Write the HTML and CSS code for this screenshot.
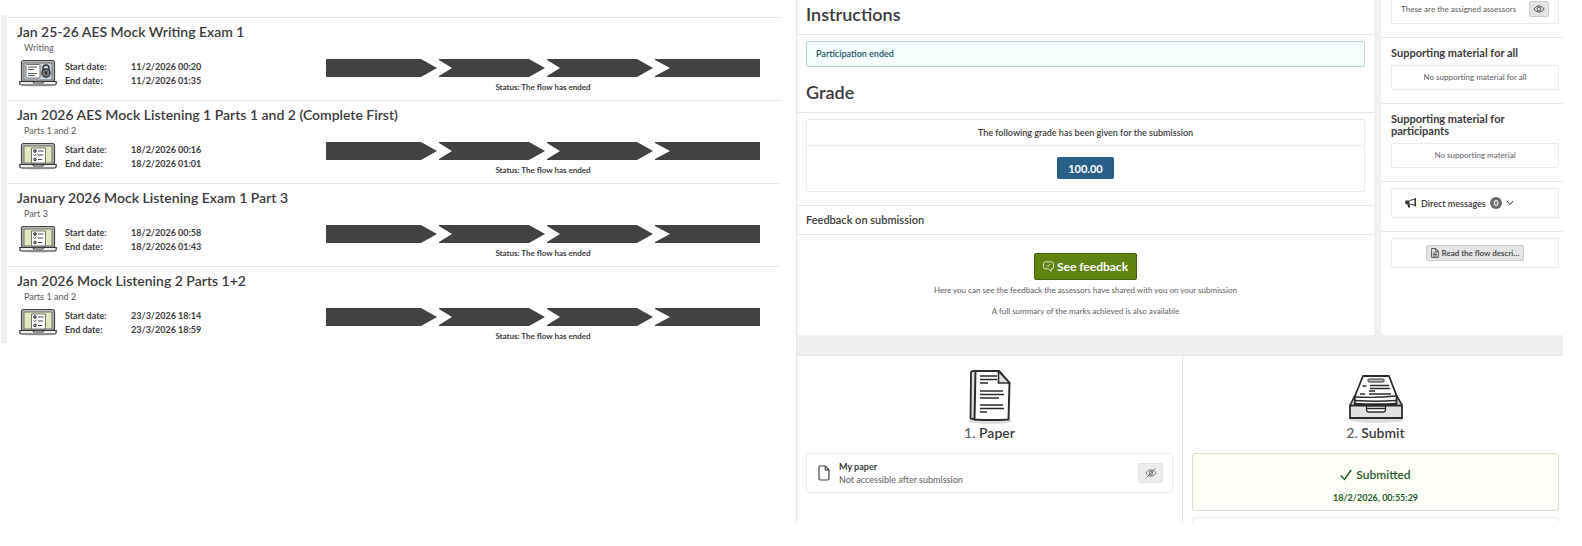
FILE: index.html
```html
<!DOCTYPE html>
<html lang="en">
<head>
    <meta charset="UTF-8">
    <meta name="viewport" content="width=device-width, initial-scale=1.0">
    <title>Exam flows</title>
    <link rel="stylesheet" href="styles.css">
</head>
<body>
    <!-- Shared icons -->
    <svg class="sprites" aria-hidden="true">
        <symbol id="laptop-lock" viewBox="0 0 38 28">
            <ellipse cx="19" cy="26" rx="17" ry="2" fill="#e4e4e4"/>
            <rect x="2.5" y="1.5" width="33" height="21" rx="2" fill="#bbb" stroke="#444" stroke-width="1.2"/>
            <rect x="5" y="4" width="28" height="17" fill="#cfd8e2" stroke="#555" stroke-width=".8"/>
            <rect x="7" y="5.5" width="14" height="13.5" rx="1" fill="#fafafa" stroke="#555" stroke-width=".8"/>
            <path d="M9 8h9M9 10.500h6M9 14.500h9M9 16.500h7" stroke="#555"/>
            <path d="M24 11V9a3 3 0 0 1 6 0v2" fill="none" stroke="#333" stroke-width="1.5"/>
            <circle cx="27" cy="14" r="4.2" fill="#777" stroke="#333" stroke-width="1.2"/>
            <path d="M27 12.500v3" stroke="#222" stroke-width="1.8"/>
            <path d="M.8 22.500h13l1 1.500h9l1-1.500h12.400v2q0 1.500-2 1.500H3q-2.200 0-2.200-1.500z" fill="#eee" stroke="#333" stroke-width="1.2"/>
        </symbol>
        <symbol id="laptop-list" viewBox="0 0 38 28">
            <ellipse cx="19" cy="26" rx="17" ry="2" fill="#e4e4e4"/>
            <rect x="2.5" y="1.5" width="33" height="21" rx="2" fill="#bbb" stroke="#444" stroke-width="1.2"/>
            <rect x="5" y="4" width="28" height="17" fill="#e2e8bd" stroke="#555" stroke-width=".8"/>
            <path d="M12.500 6h14v15h-14z" fill="#fff" stroke="#555" stroke-width=".8"/>
            <path d="M19 9h5.500M19 13h5M19 17.500h4" stroke="#444"/>
            <path d="M14.500 12.500l1 1.200 2-2" fill="none" stroke="#444"/>
            <circle cx="16" cy="9" r="1.3" fill="#aaa" stroke="#333"/>
            <circle cx="16" cy="17.500" r="1.3" fill="#aaa" stroke="#333"/>
            <path d="M.8 22.500h13l1 1.500h9l1-1.500h12.400v2q0 1.500-2 1.500H3q-2.200 0-2.200-1.500z" fill="#eee" stroke="#333" stroke-width="1.2"/>
        </symbol>
    </svg>

    <div class="page">
        <section class="flow-list" id="flowList">
            <!-- Filled in by the script below -->
        </section>

        <main class="submission">
            <div class="overview">
                <div class="details">
                    <h2 class="title title-first">Instructions</h2>
                    <div class="alert">Participation ended</div>
                    <h2 class="title">Grade</h2>
                    <div class="grade-box">
                        <p class="grade-label">The following grade has been given for the submission</p>
                        <div class="grade-value"><span class="badge">100.00</span></div>
                    </div>
                    <h3 class="feedback-title">Feedback on submission</h3>
                    <div class="feedback">
                        <button type="button" class="btn-feedback">
                            <svg width="11" height="11" viewBox="0 0 11 11" fill="none" stroke="#fff" stroke-width=".8">
                                <path d="M2.500.8h6q2 0 2 2v3q0 2-2 2h-.3v2.400L5.500 7.800h-3q-2 0-2-2v-3q0-2 2-2z"/>
                                <path d="M3.800 4.300L5 5.500l2.300-2.700"/>
                            </svg>
                            See feedback
                        </button>
                        <p>Here you can see the feedback the assessors have shared with you on your submission</p>
                        <p>A full summary of the marks achieved is also available</p>
                    </div>
                </div>

                <aside class="sidebar">
                    <div class="side-block side-block-first">
                        <div class="side-box assessors">
                            <span>These are the assigned assessors</span>
                            <button type="button" class="btn-icon" aria-label="Show assessors">
                                <svg width="12" height="8" viewBox="0 0 12 8" fill="none" stroke="#444" stroke-width=".9">
                                    <path d="M.8 4Q3 .8 6 .8T11.200 4Q9 7.200 6 7.200T.8 4z"/>
                                    <circle cx="6" cy="4" r="1.9"/>
                                </svg>
                            </button>
                        </div>
                    </div>
                    <div class="side-block">
                        <h3>Supporting material for all</h3>
                        <div class="side-box">No supporting material for all</div>
                    </div>
                    <div class="side-block">
                        <h3>Supporting material for participants</h3>
                        <div class="side-box">No supporting material</div>
                    </div>
                    <div class="side-block side-block-tight">
                        <button type="button" class="side-box messages">
                            <svg width="12" height="10" viewBox="0 0 12 10">
                                <path d="M.3 2.500h4.200v3.600L5.300 9.500H3.200L2.300 6.300H.3z" fill="#333"/>
                                <path d="M4.500 2.700L10 .9v6.600L4.500 5.900M10.500 0v8.500" fill="none" stroke="#333"/>
                            </svg>
                            Direct messages
                            <span class="count">0</span>
                            <svg width="8" height="6" viewBox="0 0 8 6" fill="none" stroke="#333"><path d="M1 1l3 3.500L7 1"/></svg>
                        </button>
                    </div>
                    <div class="side-block side-block-tight">
                        <div class="side-box read">
                            <button type="button" class="btn-read">
                                <svg width="8" height="10" viewBox="0 0 8 10" fill="none" stroke="#444" stroke-width=".9">
                                    <path d="M.6.6h4.200l2.600 2.600v6.200H.6zM4.700.6v2.800h2.700M2.200 5h3.600M2.200 6.500h3.600M2.200 8h3.600"/>
                                </svg>
                                Read the flow descri…
                            </button>
                        </div>
                    </div>
                </aside>
            </div>

            <div class="steps">
                <section class="step">
                    <svg class="step-icon" viewBox="0 0 54 56">
                        <ellipse cx="27" cy="53" rx="22" ry="3" fill="#ddd"/>
                        <path d="M8 4q2-1.500 5-1v48.500l-5.500-1z" fill="#ddd" stroke="#2b2b2b" stroke-width="1.800" stroke-linejoin="round"/>
                        <path d="M12.500 3H36l10.500 12-1 36.500q-17 1.200-34 0z" fill="#fff" stroke="#2b2b2b" stroke-width="2" stroke-linejoin="round"/>
                        <path d="M35.500 3v12h11z" fill="#ddd" stroke="#2b2b2b" stroke-width="1.600" stroke-linejoin="round"/>
                        <path d="M17 8h17M17 11.500h17M17 15h8M17 23h23M17 26.500h24M17 30h19M17 37h23M17 40.500h24M17 44h7" stroke="#2b2b2b" stroke-width="1.300"/>
                    </svg>
                    <h2><span>1.</span> Paper</h2>
                    <div class="paper-card">
                        <svg width="12" height="16" viewBox="0 0 12 16" fill="none" stroke="#444" stroke-width="1.2">
                            <path d="M2.200 1h5.300L11 4.700v8.800q0 1.500-1.200 1.500H2.200Q1 15 1 13.500v-11Q1 1 2.200 1zM7.300 1.200v3.700H11"/>
                        </svg>
                        <div class="paper-text">
                            <strong>My paper</strong>
                            <span>Not accessible after submission</span>
                        </div>
                        <button type="button" class="btn-hidden" aria-label="Not accessible" disabled>
                            <svg width="12" height="10" viewBox="0 0 12 10" fill="none" stroke="#666" stroke-width=".9">
                                <path d="M.8 5Q3 1.800 6 1.800T11.200 5Q9 8.200 6 8.200T.8 5zM1.800 9.500L10.200.5"/>
                                <circle cx="6" cy="5" r="1.8"/>
                            </svg>
                        </button>
                    </div>
                </section>

                <section class="step">
                    <svg class="step-icon" viewBox="0 0 54 56">
                        <ellipse cx="28" cy="52" rx="27" ry="3" fill="#ddd"/>
                        <path d="M1 37.500L6 27v9M53 37L47 26.500v9" fill="#ccc" stroke="#2b2b2b" stroke-width="1.600"/>
                        <path d="M14 8h26l7.500 19.500V37H5.800v-8.500z" fill="#fff" stroke="#2b2b2b" stroke-width="1.800" stroke-linejoin="round"/>
                        <path d="M6 29q21 1 41-1M6 32.500q21 1.500 41 0M6 35.500q21 1 41 0" fill="none" stroke="#2b2b2b" stroke-width="1.300"/>
                        <rect x="19" y="11" width="16" height="3" rx="1" fill="#bbb" stroke="#2b2b2b"/>
                        <path d="M13.500 18h4M21 17.500h19M21 20.500h20M20 23h6M11 26h5M20 26h22" stroke="#2b2b2b" stroke-width="1.300"/>
                        <path d="M1 37.500h52v12.500H1z" fill="#e2e2e2" stroke="#2b2b2b" stroke-width="1.800"/>
                        <path d="M17.500 38v3.500q0 2.500 2.500 2.500h14q2.500 0 2.500-2.500V38zM17.500 40.500h19" fill="#fff" stroke="#2b2b2b" stroke-width="1.300"/>
                    </svg>
                    <h2><span>2.</span> Submit</h2>
                    <div class="submitted-card">
                        <p class="submitted">
                            <svg width="12" height="12" viewBox="0 0 12 12" fill="none" stroke="#1d5c2a" stroke-width="1.4"><path d="M.8 6.500l3.700 4L11.200 1"/></svg>
                            Submitted
                        </p>
                        <p class="submitted-date">18/2/2026, 00:55:29</p>
                    </div>
                    <div class="next-card"></div>
                </section>
            </div>
        </main>
    </div>

    <script>
        const flows = [
            { name: "Jan 25-26 AES Mock Writing Exam 1", part: "Writing", icon: "laptop-lock", start: "11/2/2026 00:20", end: "11/2/2026 01:35" },
            { name: "Jan 2026 AES Mock Listening 1 Parts 1 and 2 (Complete First)", part: "Parts 1 and 2", icon: "laptop-list", start: "18/2/2026 00:16", end: "18/2/2026 01:01" },
            { name: "January 2026 Mock Listening Exam 1 Part 3", part: "Part 3", icon: "laptop-list", start: "18/2/2026 00:58", end: "18/2/2026 01:43" },
            { name: "Jan 2026 Mock Listening 2 Parts 1+2", part: "Parts 1 and 2", icon: "laptop-list", start: "23/3/2026 18:14", end: "23/3/2026 18:59" }
        ];

        const list = document.querySelector("#flowList");

        flows.forEach(flow => {
            const item = document.createElement("article");
            item.className = "flow";
            item.innerHTML = `
                <h2>${flow.name}</h2>
                <p class="part">${flow.part}</p>
                <div class="flow-body">
                    <svg class="flow-icon"><use href="#${flow.icon}"/></svg>
                    <dl class="dates">
                        <dt>Start date:</dt><dd>${flow.start}</dd>
                        <dt>End date:</dt><dd>${flow.end}</dd>
                    </dl>
                    <div class="progress">
                        <div class="phases"><i></i><i></i><i></i><i></i></div>
                        <p>Status: The flow has ended</p>
                    </div>
                </div>
            `;
            list.appendChild(item);
        });
    </script>
</body>
</html>
```
FILE: styles.css
```css
:root {
    --text-color: #3b3b3b;
    --muted: #686868;
    --line: #e6e6e6;
    --box-line: #ebebeb;
    --gutter: #f0f0f0;
    --dark: #434142;
}

* {
    box-sizing: border-box;
}

body {
    margin: 0;
    background-color: #fff;
    color: var(--text-color);
    font-family: Lato, "Open Sans", sans-serif;
    font-size: 9px;
    line-height: 12px;
}

h2, h3, p, dl, dd {
    margin: 0;
    font-weight: 600;
}

button {
    font-family: inherit;
    color: inherit;
    padding: 0;
}

svg {
    flex-shrink: 0;
}

.sprites {
    display: none;
}

.page {
    display: grid;
    grid-template-columns: 779fr 767fr;
    gap: 16px;
    align-items: start;
    padding: 0 19px 0 1px;
}

/* Flow list */
.flow-list {
    margin-top: 15px;
    padding-top: 2px;
    border-left: 6px solid var(--gutter);
}

.flow {
    height: 83px;
    padding: 6px 20px 0 10px;
    border-top: 1px solid var(--line);
}

.flow:last-child {
    height: 77px;
}

.flow h2 {
    font-size: 14px;
    line-height: 16px;
}

.flow .part {
    padding: 2px 0 0 7px;
    color: var(--muted);
    font-weight: 500;
}

.flow-body {
    display: grid;
    grid-template-columns: 38px 253px 1fr;
    column-gap: 8px;
    padding: 5px 0 0 2px;
}

.flow-icon {
    width: 38px;
    height: 28px;
}

.dates {
    display: grid;
    grid-template-columns: 66px 1fr;
    grid-auto-rows: 14px;
    padding-top: 1px;
    line-height: 14px;
    font-size: 9px;
}

.dates dt, .dates dd {
    font-weight: 700;
}

.progress p {
    padding-top: 4px;
    font-size: 8px;
    font-weight: 700;
    text-align: center;
}

.phases {
    display: grid;
    grid-template-columns: 111fr 106fr 106fr 105fr;
    gap: 2px;
    height: 18px;
}

.phases i {
    background-color: var(--dark);
    clip-path: polygon(0 0, calc(100% - 16px) 0, 100% 50%, calc(100% - 16px) 100%, 0 100%, 0 94%, 13px 50%, 0 6%);
}

.phases i:first-child {
    clip-path: polygon(0 0, calc(100% - 16px) 0, 100% 50%, calc(100% - 16px) 100%, 0 100%);
}

.phases i:last-child {
    clip-path: polygon(0 0, 100% 0, 100% 100%, 0 100%, 0 94%, 15px 50%, 0 6%);
}

/* Submission */
.submission {
    background-color: var(--gutter);
    border-left: 1px solid var(--line);
}

.overview {
    display: grid;
    grid-template-columns: 1fr 182px;
    gap: 7px;
    padding-bottom: 20px;
}

.details, .sidebar {
    background-color: #fff;
}

.title {
    padding: 14px 9px 9px;
    border-bottom: 1px solid var(--line);
    font-size: 18px;
    line-height: 22px;
}

.title-first {
    padding-top: 3px;
}

.alert {
    margin: 6px 9px 0;
    padding: 6px 9px;
    border: 1px solid #bccfd3;
    border-radius: 2px;
    background-color: #f7fefe;
    color: #235468;
    font-weight: 600;
}

.grade-box {
    margin: 6px 9px 13px;
    border: 1px solid var(--box-line);
    border-radius: 2px;
    text-align: center;
}

.grade-label {
    padding: 7px 0 6px;
    border-bottom: 1px solid var(--box-line);
}

.grade-value {
    display: flex;
    justify-content: center;
    padding: 11px 0 12px;
}

.badge {
    padding: 4px 11px 3px;
    border-radius: 2px;
    background-color: #285f87;
    color: #fff;
    font-size: 11px;
    font-weight: 700;
    line-height: 15px;
}

.feedback-title {
    padding: 6px 9px 7px;
    border-top: 1px solid var(--line);
    border-bottom: 1px solid var(--line);
    font-size: 11px;
    line-height: 15px;
}

.feedback {
    display: flex;
    flex-direction: column;
    align-items: center;
    padding: 18px 0 18px;
    color: var(--muted);
    font-size: 8px;
}

.feedback p {
    padding-top: 4px;
    font-weight: 500;
}

.feedback p:last-child {
    padding-top: 9px;
}

.btn-feedback {
    display: flex;
    align-items: center;
    gap: 3px;
    height: 27px;
    padding: 0 8px;
    border: 1px solid #456010;
    border-radius: 2px;
    background-color: #5f8310;
    color: #fff;
    font-size: 12px;
    font-weight: 700;
}

/* Sidebar */
.side-block {
    padding: 9px 4px 13px 10px;
    border-bottom: 1px solid var(--line);
}

.side-block-first {
    padding-top: 0;
}

.side-block-tight {
    padding-top: 6px;
}

.side-block:last-child {
    border-bottom: 0;
}

.side-block h3 {
    margin-bottom: 6px;
    font-size: 11px;
    font-weight: 700;
    line-height: 12px;
}

.side-box {
    width: 100%;
    padding: 5px 6px 6px;
    border: 1px solid var(--box-line);
    border-radius: 2px;
    background-color: #fff;
    color: var(--muted);
    font-size: 8px;
    font-weight: 500;
    text-align: center;
}

.assessors {
    display: flex;
    align-items: center;
    justify-content: space-between;
    padding: 1px 9px 6px;
    border-top: 0;
}

.btn-icon, .btn-hidden, .btn-read {
    display: flex;
    align-items: center;
    justify-content: center;
    border: 1px solid #ccc;
    border-radius: 2px;
    background-color: #e4e4e4;
}

.btn-icon {
    width: 20px;
    height: 16px;
}

.messages {
    display: flex;
    align-items: center;
    gap: 4px;
    height: 30px;
    padding: 0 13px;
    color: var(--text-color);
    font-size: 9px;
    font-weight: 600;
}

.count {
    padding: 0 4px;
    border-radius: 6px;
    background-color: #6c6c6c;
    color: #fff;
    font-size: 8px;
    font-weight: 700;
    line-height: 12px;
}

.read {
    display: flex;
    justify-content: center;
    padding: 6px;
}

.btn-read {
    gap: 3px;
    height: 16px;
    padding: 0 4px;
    color: var(--text-color);
    font-size: 8px;
    font-weight: 600;
}

/* Steps */
.steps {
    display: grid;
    grid-template-columns: 385fr 381fr;
    border-top: 1px solid var(--line);
    background-color: #fff;
}

.step {
    padding: 12px 9px 0;
    text-align: center;
}

.step + .step {
    padding: 12px 4px 0 9px;
    border-left: 1px solid var(--line);
}

.step-icon {
    display: block;
    width: 54px;
    height: 56px;
    margin: 0 auto;
}

.step h2 {
    margin-bottom: 11px;
    font-size: 14px;
    line-height: 18px;
}

.step h2 span {
    color: var(--muted);
}

.paper-card {
    display: flex;
    align-items: center;
    gap: 9px;
    padding: 6px 9px 6px 11px;
    border: 1px solid var(--box-line);
    border-radius: 3px;
    text-align: left;
}

.paper-text {
    display: grid;
    flex: 1;
    line-height: 13px;
}

.paper-text strong {
    font-weight: 700;
}

.paper-text span {
    color: var(--muted);
    font-weight: 500;
}

.btn-hidden {
    width: 25px;
    height: 20px;
    border-color: #e2e2e2;
    background-color: #ececec;
}

.submitted-card {
    padding: 13px 0 6px;
    border: 1px solid #dadfd3;
    border-radius: 3px;
    background-color: #fdfff6;
    color: #27592f;
}

.submitted {
    display: flex;
    align-items: center;
    justify-content: center;
    gap: 4px;
    font-size: 12px;
    line-height: 16px;
}

.submitted-date {
    padding-top: 9px;
    font-weight: 700;
}

.next-card {
    height: 5px;
    margin-top: 6px;
    border: 1px solid var(--box-line);
    border-bottom: 0;
    border-radius: 3px 3px 0 0;
}
```
